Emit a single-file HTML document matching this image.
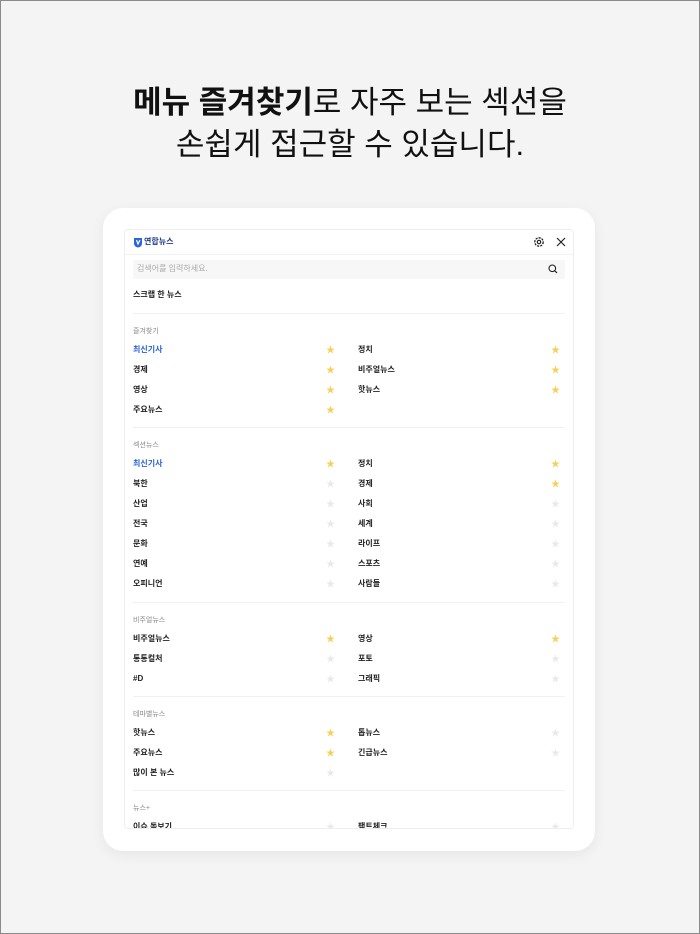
<!DOCTYPE html>
<html><head><meta charset="utf-8"><style>
*{margin:0;padding:0;box-sizing:border-box}
body{width:700px;height:934px;background:#f4f4f4;position:relative;overflow:hidden;font-family:"Liberation Sans","Noto Sans CJK KR",sans-serif}
.frame{position:absolute;left:0;top:0;width:700px;height:934px;border:1px solid #8a8a8a;pointer-events:none}
.h{position:absolute;left:0;width:700px;text-align:center;font-size:31px;color:#111;line-height:42px}
.card{position:absolute;left:103px;top:208px;width:492px;height:643px;background:#fff;border-radius:20px;box-shadow:0 4px 14px rgba(0,0,0,.06)}
.scr{position:absolute;left:124px;top:229px;width:450px;height:600px;border:1px solid #eee;border-radius:4px;background:#fff;overflow:hidden}
.w{position:absolute;left:0;top:2px;width:450px;height:600px}
.t{position:absolute;font-size:8px;font-weight:bold;color:#222;line-height:10px;white-space:nowrap}
.l{position:absolute;font-size:7px;color:#888;line-height:10px}
.s{position:absolute;font-size:9px;line-height:10px;color:#e9e9e9}
.on{color:#f6cf55}
.d{position:absolute;left:8px;width:432px;height:1px;background:#f0f0f0}
.b{color:#2a64d6}
</style></head><body>
<div class="frame"></div>
<div class="h" style="top:82px"><b>메뉴 즐겨찾기</b>로 자주 보는 섹션을</div>
<div class="h" style="top:124px">손쉽게 접근할 수 있습니다.</div>
<div class="card"></div>
<div class="scr">
<div style="position:absolute;left:0;top:0;width:450px;height:25px;border-bottom:1px solid #f2f2f2"></div>
<div class="w">
<svg style="position:absolute;left:8px;top:5px" width="10" height="11" viewBox="0 0 10 11"><path d="M1 1 L9 1 L9 6 Q9 10 5 10.5 Q1 10 1 6Z" fill="#2a64d6"/><path d="M3.5 3 L5 7 L7 3" stroke="#fff" stroke-width="1.2" fill="none"/></svg>
<div class="t" style="left:19px;top:5px;color:#1e3a8a;font-size:8px">연합뉴스</div>
<svg style="position:absolute;left:408px;top:4px" width="12" height="12" viewBox="0 0 12 12"><circle cx="6" cy="6" r="4.2" fill="none" stroke="#222" stroke-width="1.3" stroke-dasharray="2.2 1"/><circle cx="6" cy="6" r="1.7" fill="none" stroke="#222" stroke-width="1.2"/></svg>
<svg style="position:absolute;left:431px;top:5px" width="10" height="10" viewBox="0 0 10 10"><path d="M1 1L9 9M9 1L1 9" stroke="#222" stroke-width="1.2"/></svg>
<div style="position:absolute;left:8px;top:28px;width:432px;height:19px;background:#f7f7f7;border-radius:2px"></div>
<div class="l" style="left:12px;top:32px;font-size:8px;color:#aaa">검색어를 입력하세요.</div>
<svg style="position:absolute;left:423px;top:32px" width="10" height="10" viewBox="0 0 10 10"><circle cx="4.3" cy="4.3" r="3.3" fill="none" stroke="#222" stroke-width="1.1"/><path d="M6.8 6.8L9 9" stroke="#222" stroke-width="1.2"/></svg>
<div class="t" style="left:8px;top:58px">스크랩 한 뉴스</div>
<div class="d" style="top:81px"></div>
<div class="l" style="left:8px;top:95px">즐겨찾기</div>
<div class="t b" style="left:8px;top:113px">최신기사</div><div class="s on" style="left:201px;top:113px">★</div>
<div class="t" style="left:233px;top:113px">정치</div><div class="s on" style="left:426px;top:113px">★</div>
<div class="t" style="left:8px;top:133px">경제</div><div class="s on" style="left:201px;top:133px">★</div>
<div class="t" style="left:233px;top:133px">비주얼뉴스</div><div class="s on" style="left:426px;top:133px">★</div>
<div class="t" style="left:8px;top:153px">영상</div><div class="s on" style="left:201px;top:153px">★</div>
<div class="t" style="left:233px;top:153px">핫뉴스</div><div class="s on" style="left:426px;top:153px">★</div>
<div class="t" style="left:8px;top:173px">주요뉴스</div><div class="s on" style="left:201px;top:173px">★</div>
<div class="d" style="top:195px"></div>
<div class="l" style="left:8px;top:209px">섹션뉴스</div>
<div class="t b" style="left:8px;top:227px">최신기사</div><div class="s on" style="left:201px;top:227px">★</div>
<div class="t" style="left:233px;top:227px">정치</div><div class="s on" style="left:426px;top:227px">★</div>
<div class="t" style="left:8px;top:247px">북한</div><div class="s" style="left:201px;top:247px">★</div>
<div class="t" style="left:233px;top:247px">경제</div><div class="s on" style="left:426px;top:247px">★</div>
<div class="t" style="left:8px;top:267px">산업</div><div class="s" style="left:201px;top:267px">★</div>
<div class="t" style="left:233px;top:267px">사회</div><div class="s" style="left:426px;top:267px">★</div>
<div class="t" style="left:8px;top:287px">전국</div><div class="s" style="left:201px;top:287px">★</div>
<div class="t" style="left:233px;top:287px">세계</div><div class="s" style="left:426px;top:287px">★</div>
<div class="t" style="left:8px;top:307px">문화</div><div class="s" style="left:201px;top:307px">★</div>
<div class="t" style="left:233px;top:307px">라이프</div><div class="s" style="left:426px;top:307px">★</div>
<div class="t" style="left:8px;top:327px">연예</div><div class="s" style="left:201px;top:327px">★</div>
<div class="t" style="left:233px;top:327px">스포츠</div><div class="s" style="left:426px;top:327px">★</div>
<div class="t" style="left:8px;top:347px">오피니언</div><div class="s" style="left:201px;top:347px">★</div>
<div class="t" style="left:233px;top:347px">사람들</div><div class="s" style="left:426px;top:347px">★</div>
<div class="d" style="top:370px"></div>
<div class="l" style="left:8px;top:384px">비주얼뉴스</div>
<div class="t" style="left:8px;top:402px">비주얼뉴스</div><div class="s on" style="left:201px;top:402px">★</div>
<div class="t" style="left:233px;top:402px">영상</div><div class="s on" style="left:426px;top:402px">★</div>
<div class="t" style="left:8px;top:422px">통통컬처</div><div class="s" style="left:201px;top:422px">★</div>
<div class="t" style="left:233px;top:422px">포토</div><div class="s" style="left:426px;top:422px">★</div>
<div class="t" style="left:8px;top:442px">#D</div><div class="s" style="left:201px;top:442px">★</div>
<div class="t" style="left:233px;top:442px">그래픽</div><div class="s" style="left:426px;top:442px">★</div>
<div class="d" style="top:464px"></div>
<div class="l" style="left:8px;top:478px">테마별뉴스</div>
<div class="t" style="left:8px;top:496px">핫뉴스</div><div class="s on" style="left:201px;top:496px">★</div>
<div class="t" style="left:233px;top:496px">톱뉴스</div><div class="s" style="left:426px;top:496px">★</div>
<div class="t" style="left:8px;top:516px">주요뉴스</div><div class="s on" style="left:201px;top:516px">★</div>
<div class="t" style="left:233px;top:516px">긴급뉴스</div><div class="s" style="left:426px;top:516px">★</div>
<div class="t" style="left:8px;top:536px">많이 본 뉴스</div><div class="s" style="left:201px;top:536px">★</div>
<div class="d" style="top:558px"></div>
<div class="l" style="left:8px;top:572px">뉴스+</div>
<div class="t" style="left:8px;top:590px">이슈 돋보기</div><div class="s" style="left:201px;top:590px">★</div>
<div class="t" style="left:233px;top:590px">팩트체크</div><div class="s" style="left:426px;top:590px">★</div>
</div>
</div>
</body></html>
